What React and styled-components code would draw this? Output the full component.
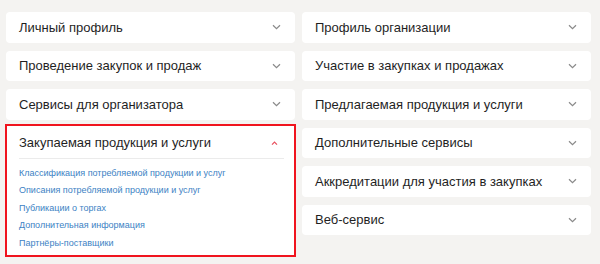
import React from "react";
import styled, { createGlobalStyle } from "styled-components";

const Global = createGlobalStyle`
  html, body { margin: 0; padding: 0; background: #f4f3f1; }
  body { font-family: "Liberation Sans", Arial, sans-serif; }
`;

const Page = styled.div`
  display: grid;
  grid-template-columns: 289px 289px;
  column-gap: 7px;
  padding: 12px 9px 0 6px;
  align-items: start;
  width: 600px;
  height: 264px;
  box-sizing: border-box;
`;

const Column = styled.div`
  display: flex;
  flex-direction: column;
  gap: 8px;
`;

const Card = styled.div`
  background: #fff;
  border-radius: 4px;
  box-sizing: border-box;
  ${(p) =>
    p.$active
      ? `border: 2px solid #f0141e; border-radius: 0; margin: -4px -1px 0 -1px; height: 133px;`
      : ``}
`;

const Header = styled.div`
  display: flex;
  align-items: center;
  justify-content: space-between;
  height: 30.5px;
  padding: 0 14px 0 13px;
  box-sizing: border-box;
  ${(p) => (p.$active ? `height: 32px; padding: 2px 15px 0 12px;` : ``)}
`;

const Title = styled.span`
  font-size: 13px;
  color: #1f1f1f;
  white-space: nowrap;
`;

const Chevron = styled.svg`
  width: 9px;
  height: 6px;
  flex: none;
`;

const Body = styled.div`
  margin: 0 10px 0 12px;
  border-top: 1px solid #ebebeb;
  padding: 6px 0 0 0;
  display: flex;
  flex-direction: column;
`;

const Link = styled.a`
  font-size: 9px;
  color: #3c82c4;
  text-decoration: none;
  line-height: 17.6px;
  white-space: nowrap;
`;

const Down = () => (
  <Chevron viewBox="0 0 9 6">
    <path d="M1 1.2 L4.5 4.6 L8 1.2" fill="none" stroke="#8a8a8a" strokeWidth="1.2" />
  </Chevron>
);
const Up = () => (
  <Chevron viewBox="0 0 9 6">
    <path d="M2 4.6 L4.5 2 L7 4.6" fill="none" stroke="#e8505e" strokeWidth="1.2" />
  </Chevron>
);

const left = ["Личный профиль", "Проведение закупок и продаж", "Сервисы для организатора"];
const right = [
  "Профиль организации",
  "Участие в закупках и продажах",
  "Предлагаемая продукция и услуги",
  "Дополнительные сервисы",
  "Аккредитации для участия в закупках",
  "Веб-сервис",
];
const links = [
  "Классификация потребляемой продукции и услуг",
  "Описания потребляемой продукции и услуг",
  "Публикации о торгах",
  "Дополнительная информация",
  "Партнёры-поставщики",
];

export default function App() {
  return (
    <>
      <Global />
      <Page>
        <Column>
          {left.map((t) => (
            <Card key={t}>
              <Header>
                <Title>{t}</Title>
                <Down />
              </Header>
            </Card>
          ))}
          <Card $active>
            <Header $active>
              <Title>Закупаемая продукция и услуги</Title>
              <Up />
            </Header>
            <Body>
              {links.map((l) => (
                <Link key={l} href="#">{l}</Link>
              ))}
            </Body>
          </Card>
        </Column>
        <Column>
          {right.map((t) => (
            <Card key={t}>
              <Header>
                <Title>{t}</Title>
                <Down />
              </Header>
            </Card>
          ))}
        </Column>
      </Page>
    </>
  );
}
